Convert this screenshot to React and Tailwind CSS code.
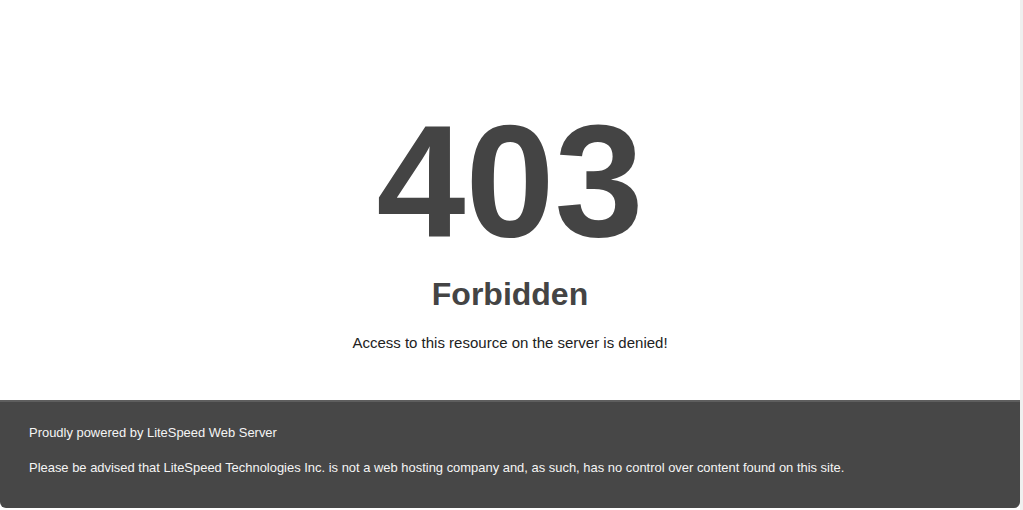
import React from 'react';

function App() {
  return (
    <div className="flex h-[510px] w-full bg-white font-['Liberation_Sans',Arial,sans-serif]">
      <div className="flex flex-1 flex-col">
        {/* main message */}
        <main className="flex h-[400px] flex-col items-center text-[#444]">
          <h1 className="mt-[101px] text-[160px] font-bold leading-none">403</h1>
          <h2 className="mt-[14px] text-[32px] font-bold leading-[1.2]">Forbidden</h2>
          <p className="mt-[18px] text-[15px] leading-[24px] text-[#222]">
            Access to this resource on the server is denied!
          </p>
        </main>

        {/* footer */}
        <footer className="flex h-[108px] flex-col gap-[15px] rounded-b-[6px] border-t-2 border-[#5e5e5e] bg-[#474747] px-[29px] pt-[21px] text-[12.95px] leading-[20px] text-[#f5f5f5]">
          <p>Proudly powered by LiteSpeed Web Server</p>
          <p>
            Please be advised that LiteSpeed Technologies Inc. is not a web hosting company and, as such, has no control over content found on this site.
          </p>
        </footer>
      </div>
      <div className="w-[3px] bg-[#efefef]" />
    </div>
  );
}

export default App;
